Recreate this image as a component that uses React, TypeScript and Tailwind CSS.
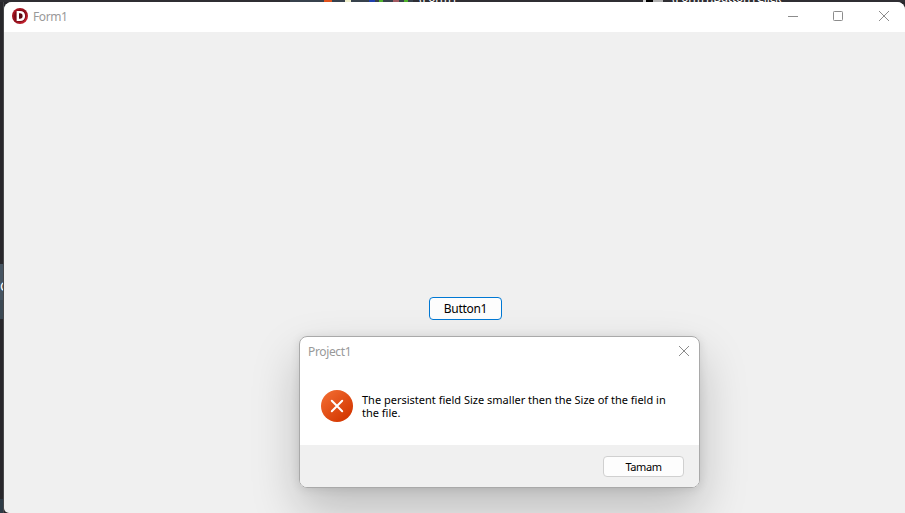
import React from 'react';

const AppLogo: React.FC = () => (
    <svg width="16" height="16" viewBox="0 0 16 16" className="shrink-0">
        <defs>
            <linearGradient id="logoFill" x1="0" y1="0" x2="1" y2="1">
                <stop offset="0" stopColor="#b81824" />
                <stop offset="0.5" stopColor="#8f101b" />
                <stop offset="1" stopColor="#dc2836" />
            </linearGradient>
        </defs>
        <circle cx="8" cy="8" r="8" fill="url(#logoFill)" />
        <circle cx="8" cy="8" r="6" fill="#7c0c17" />
        <path d="M4.6 3H8c3.2 0 5.1 1.9 5.1 5S11.2 13 8 13H4.600Z" fill="#fff" />
        <path d="M7 5.200H8c1.700 0 2.600 1 2.600 2.800s-.9 2.800-2.600 2.800H7Z" fill="#5c0a12" />
    </svg>
);

const CloseGlyph: React.FC = () => (
    <svg width="12" height="12" viewBox="0 0 12 12" fill="none" stroke="#8c8c8c" strokeWidth="1">
        <path d="M1 1l10 10M11 1L1 11" />
    </svg>
);

const ErrorIcon: React.FC = () => (
    <svg width="32" height="32" viewBox="0 0 32 32" className="shrink-0">
        <defs>
            <linearGradient id="errorFill" x1="0.15" y1="0.1" x2="0.85" y2="0.9">
                <stop offset="0" stopColor="#f0682d" />
                <stop offset="1" stopColor="#d33600" />
            </linearGradient>
        </defs>
        <circle cx="16" cy="16" r="16" fill="url(#errorFill)" />
        <path d="M10.800 10.800l10.400 10.400M21.200 10.800L10.800 21.200" stroke="#fff" strokeWidth="2" strokeLinecap="round" />
    </svg>
);

// The sliver of the IDE that shows above the form
const IdeStrip: React.FC = () => (
    <div className="flex h-[2px] overflow-hidden bg-[#2f2e33]">
        <div className="ml-[290px] flex h-[2px] w-[123px] bg-[#37414c]">
            <span className="ml-[34px] h-[2px] w-[8px] bg-[#e0521c]" />
            <span className="ml-[13px] h-[2px] w-[6px] bg-[#eeeecb]" />
            <span className="ml-[18px] h-[2px] w-[6px] bg-[#1f3fae]" />
            <span className="ml-[4px] h-[2px] w-[4px] bg-[#4fb32b]" />
            <span className="ml-[10px] h-[2px] w-[6px] bg-[#a35a61]" />
            <span className="ml-[5px] h-[2px] w-[4px] bg-[#4fb32b]" />
        </div>
        <span className="ml-[6px] mt-[-9px] w-[224px] shrink-0 text-[12px] leading-[14px] tracking-[-0.3px] text-white">(Form1</span>
        <span className="h-[2px] w-[3px] bg-[#d0d0d0]" />
        <span className="h-[2px] w-[7px] bg-black" />
        <span className="h-[2px] w-[10px] bg-[#b0b0b0]" />
        <span className="ml-[9px] mt-[-9px] shrink-0 whitespace-nowrap text-[12px] leading-[14px] tracking-[-0.3px] text-white">(Form1.Button1Click</span>
    </div>
);

const MessageDialog: React.FC = () => (
    <div className="absolute left-[299px] top-[336px] h-[152px] w-[401px] rounded-lg shadow-[0_22px_48px_rgba(0,0,0,0.22),0_1px_10px_rgba(0,0,0,0.1)]">
        <div className="flex h-full flex-col overflow-hidden rounded-lg border border-[#a9a9a9] bg-white">
            <div className="flex h-[30px] shrink-0 items-center justify-between pb-[2px] pl-2 pr-[9px]">
                <span className="pt-[2px] text-[12px] tracking-[-0.35px] text-[#999]">Project1</span>
                <button aria-label="Close"><CloseGlyph /></button>
            </div>
            <div className="flex h-[78px] shrink-0 gap-[9px] pl-[21px] pt-[23px]">
                <ErrorIcon />
                <div className="pt-[3px] text-[11px] leading-[13px] text-black">
                    The persistent field Size smaller then the Size of the field in<br />the file.
                </div>
            </div>
            <div className="flex flex-1 justify-end bg-[#f0f0f0] pr-[15px] pt-[11px]">
                <button className="h-[21px] w-[81px] rounded-[4px] border border-[#d0d0d0] bg-[#fdfdfd] text-[11px] leading-[19px] tracking-[-0.4px] text-black">Tamam</button>
            </div>
        </div>
    </div>
);

const App: React.FC = () => {
    return (
        <div className="relative h-[513px] w-[905px] overflow-hidden bg-[#28272b] font-['Noto_Sans',sans-serif]">
            <IdeStrip />
            <div className="flex h-[511px]">
                <div className="flex w-[4px] shrink-0 flex-col overflow-hidden border-r border-[#48484a]">
                    <div className="mt-[262px] h-[36px] shrink-0 bg-[#465461]">
                        <span className="block pt-[13px] text-[13px] leading-[18px] text-white">C</span>
                    </div>
                    <div className="h-[19px] shrink-0 bg-[#3b4853]" />
                    <div className="mt-auto h-[14px] shrink-0 bg-[#2e3b46]" />
                </div>
                <div className="flex flex-1 flex-col overflow-hidden rounded-tl-lg rounded-tr-lg rounded-bl-[5px] bg-[#f0f0f0]">
                    <div className="flex h-[30px] shrink-0 items-center bg-white pb-[2px] pl-2">
                        <AppLogo />
                        <span className="ml-[5px] flex-1 pt-[2px] text-[12px] tracking-[-0.4px] text-[#999]">Form1</span>
                        <svg width="10" height="10" viewBox="0 0 10 10" className="mr-[35px]">
                            <path d="M0 5.500h10" stroke="#8c8c8c" />
                        </svg>
                        <svg width="10" height="10" viewBox="0 0 10 10" className="mr-[35px]">
                            <rect x=".5" y=".5" width="9" height="9" rx=".8" fill="none" stroke="#8c8c8c" />
                        </svg>
                        <button aria-label="Close" className="mr-[15px]"><CloseGlyph /></button>
                    </div>
                    <div className="flex pl-[425px] pt-[265px]">
                        <button className="h-[23px] w-[73px] rounded-[4px] border border-[#0078d4] bg-[#fdfdfd] text-[12px] leading-[21px] tracking-[-0.3px] text-black">Button1</button>
                    </div>
                </div>
            </div>
            <MessageDialog />
        </div>
    );
};

export default App;
